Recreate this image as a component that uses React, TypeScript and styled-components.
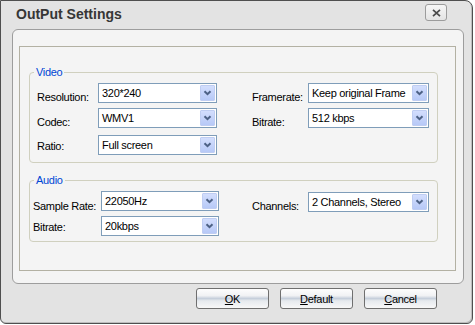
import styled, { createGlobalStyle } from "styled-components";
import { FC, ReactNode } from "react";

const GlobalStyles = createGlobalStyle`
  html, body {
    margin: 0;
    padding: 0;
    overflow: hidden;
    background: #ffffff;
  }

  body {
    font-family: "Liberation Sans", Arial, sans-serif;
    font-size: 11px;
    letter-spacing: -0.3px;
    color: #000000;
  }
`;

const Window = styled.div`
  box-sizing: border-box;
  width: 473px;
  height: 324px;
  background: #e3e3e3;
  border: 1px solid #4f4f4f;
  border-radius: 0 8px 6px 6px;
  box-shadow: inset -1px -1px 0 #bdbdbd;
  display: flex;
  flex-direction: column;
`;

const TitleBar = styled.div`
  display: flex;
  align-items: flex-start;
  justify-content: space-between;
  height: 28px;
  padding: 0 25px 0 15px;
`;

const Title = styled.div`
  margin-top: 5px;
  font-size: 14px;
  font-weight: bold;
  line-height: 16px;
  letter-spacing: 0;
  color: #363636;
`;

const CloseButton = styled.button`
  box-sizing: border-box;
  width: 22px;
  height: 17px;
  margin-top: 3px;
  padding: 0;
  border: 1px solid #9c9c9c;
  border-radius: 3px;
  background: linear-gradient(#f6f6f6, #e4e4e4);
  display: flex;
  align-items: center;
  justify-content: center;
`;

const Panel = styled.div`
  box-sizing: border-box;
  height: 255px;
  margin: 0 8px 0 11px;
  padding: 16px 7px 12px 6px;
  background: #f4f4f4;
  border: 1px solid #9d9d9d;
  border-radius: 6px;
  display: flex;
`;

const Frame = styled.div`
  flex: 1;
  padding: 19px 17px 28px 9px;
  border: 1px solid #b3b1a3;
  display: flex;
  flex-direction: column;
  gap: 11px;
`;

const Group = styled.fieldset<{ $bottom: number }>`
  margin: 0;
  padding: 4px 8px ${(p) => p.$bottom}px 0;
  min-width: 0;
  border: 1px solid #d0d0bf;
  border-radius: 4px;
  display: flex;
  justify-content: space-between;
`;

const Legend = styled.legend`
  margin-left: 4px;
  padding: 0 2px;
  line-height: 13px;
  color: #0046d5;
`;

const Column = styled.div<{ $indent?: number }>`
  display: flex;
  flex-direction: column;
  padding-left: ${(p) => p.$indent ?? 0}px;
`;

const Row = styled.div<{ $gap?: number }>`
  display: flex;
  align-items: center;
  height: 20px;
  margin-top: ${(p) => p.$gap ?? 0}px;
`;

const Label = styled.span<{ $w: number; $drop: number }>`
  flex-shrink: 0;
  width: ${(p) => p.$w}px;
  padding-top: ${(p) => p.$drop}px;
  line-height: 13px;
  white-space: nowrap;
`;

const Select = styled.div<{ $w: number }>`
  box-sizing: border-box;
  width: ${(p) => p.$w}px;
  height: 20px;
  border: 1px solid #7f9db9;
  background: #ffffff;
  display: flex;
  align-items: center;
`;

const SelectValue = styled.span`
  flex: 1;
  padding-left: 3px;
  line-height: 13px;
  white-space: nowrap;
  overflow: hidden;
`;

const DropButton = styled.span`
  box-sizing: border-box;
  width: 15px;
  height: 16px;
  margin-right: 1px;
  border: 1px solid #bfcdf2;
  border-radius: 1px;
  background: linear-gradient(#d3defd, #b7c9f7);
  display: flex;
  align-items: center;
  justify-content: center;
`;

const ButtonRow = styled.div`
  display: flex;
  justify-content: flex-end;
  gap: 11px;
  margin-top: 4px;
  padding-right: 35px;
`;

const ActionButton = styled.button`
  box-sizing: border-box;
  width: 73px;
  height: 21px;
  padding: 1px 0 0;
  border: 1px solid #6f6f6f;
  border-radius: 3px;
  font: inherit;
  letter-spacing: inherit;
  color: #000000;
  background: linear-gradient(
    #fdfdfd 0%,
    #f1f2f4 35%,
    #c6cfdb 50%,
    #e6eaee 62%,
    #f8f8f8 100%
  );
`;

const Chevron = () => (
  <svg width="9" height="6" viewBox="0 0 9 6">
    <path d="M1.5 1.2 L4.5 4.2 L7.5 1.2" fill="none" stroke="#4d6185" strokeWidth="2" />
  </svg>
);

const CloseGlyph = () => (
  <svg width="9" height="8" viewBox="0 0 9 8">
    <path d="M1 0.8 L8 7.2 M8 0.8 L1 7.2" fill="none" stroke="#4a4a4a" strokeWidth="1.7" />
  </svg>
);

type FieldProps = {
    label: string
    value: string
    labelWidth: number
    selectWidth: number
    drop: number
    gap?: number
}

const Field: FC<FieldProps> = (props) => (
    <Row $gap={props.gap}>
        <Label $w={props.labelWidth} $drop={props.drop}>{props.label}</Label>
        <Select $w={props.selectWidth}>
            <SelectValue>{props.value}</SelectValue>
            <DropButton><Chevron/></DropButton>
        </Select>
    </Row>
);

const Mnemonic: FC<{ letter: string, children: ReactNode }> = (props) => (
    <ActionButton><u>{props.letter}</u>{props.children}</ActionButton>
);

const App: FC = () => {
    return <>
        <GlobalStyles/>
        <Window>
            <TitleBar>
                <Title>OutPut Settings</Title>
                <CloseButton><CloseGlyph/></CloseButton>
            </TitleBar>
            <Panel>
                <Frame>
                    <Group $bottom={7}>
                        <Legend>Video</Legend>
                        <Column $indent={7}>
                            <Field label="Resolution:" value="320*240" labelWidth={61} selectWidth={119} drop={9}/>
                            <Field label="Codec:" value="WMV1" labelWidth={61} selectWidth={119} drop={9} gap={5}/>
                            <Field label="Ratio:" value="Full screen" labelWidth={61} selectWidth={119} drop={2} gap={7}/>
                        </Column>
                        <Column>
                            <Field label="Framerate:" value="Keep original Frame" labelWidth={56} selectWidth={121} drop={9}/>
                            <Field label="Bitrate:" value="512 kbps" labelWidth={56} selectWidth={121} drop={9} gap={5}/>
                        </Column>
                    </Group>
                    <Group $bottom={5}>
                        <Legend>Audio</Legend>
                        <Column $indent={3}>
                            <Field label="Sample Rate:" value="22050Hz" labelWidth={68} selectWidth={118} drop={10}/>
                            <Field label="Bitrate:" value="20kbps" labelWidth={68} selectWidth={118} drop={3} gap={5}/>
                        </Column>
                        <Column>
                            <Field label="Channels:" value="2 Channels, Stereo" labelWidth={56} selectWidth={121} drop={9} gap={1}/>
                        </Column>
                    </Group>
                </Frame>
            </Panel>
            <ButtonRow>
                <Mnemonic letter="O">K</Mnemonic>
                <Mnemonic letter="D">efault</Mnemonic>
                <Mnemonic letter="C">ancel</Mnemonic>
            </ButtonRow>
        </Window>
    </>;
};
export default App;
